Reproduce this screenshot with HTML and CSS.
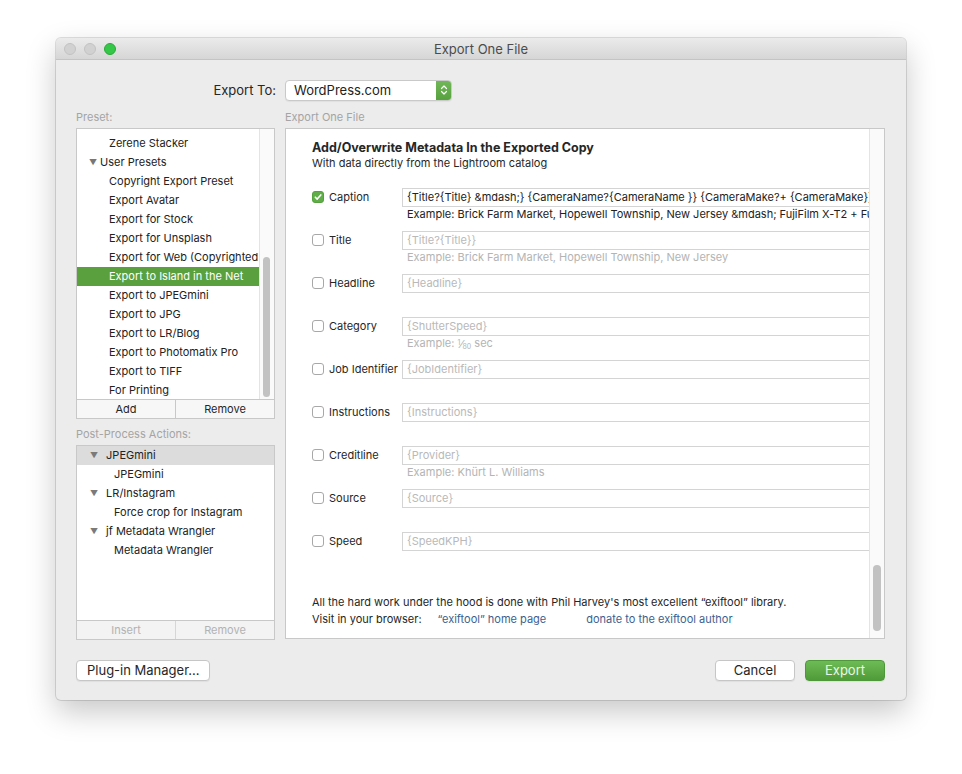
FILE: index.html
```html
<!DOCTYPE html>
<html>
<head>
<meta charset="utf-8">
<title>Export One File</title>
<link rel="stylesheet" href="styles.css">
</head>
<body>
<div class="window">
  <div class="titlebar">
    <div class="lights">
      <span class="light gray"></span>
      <span class="light gray"></span>
      <span class="light green"></span>
    </div>
    <div class="title">Export One File</div>
  </div>
  <div class="content">
    <div class="export-to">
      <span class="export-label">Export To:</span>
      <div class="popup">
        <span class="popup-text">WordPress.com</span>
        <span class="stepper">
          <svg width="8" height="12" viewBox="0 0 8 12"><path d="M1.5 4.5 L4 2 L6.5 4.5 M1.5 7.5 L4 10 L6.5 7.5" fill="none" stroke="#fff" stroke-width="1.2" stroke-linecap="round" stroke-linejoin="round"/></svg>
        </span>
      </div>
    </div>
    <div class="main">
      <div class="left">
        <div class="section-label">Preset:</div>
        <div class="listbox preset-box">
          <div class="list preset-list">
            <div class="rows">
              <div class="row child">Zerene Stacker</div>
              <div class="row group"><span class="tri">&#9660;</span>User Presets</div>
              <div class="row child">Copyright Export Preset</div>
              <div class="row child">Export Avatar</div>
              <div class="row child">Export for Stock</div>
              <div class="row child">Export for Unsplash</div>
              <div class="row child">Export for Web (Copyrighted</div>
              <div class="row child selected">Export to Island in the Net</div>
              <div class="row child">Export to JPEGmini</div>
              <div class="row child">Export to JPG</div>
              <div class="row child">Export to LR/Blog</div>
              <div class="row child">Export to Photomatix Pro</div>
              <div class="row child">Export to TIFF</div>
              <div class="row child">For Printing</div>
            </div>
            <div class="vscroll small"><div class="thumb preset-thumb"></div></div>
          </div>
          <div class="list-buttons">
            <div class="lbtn">Add</div>
            <div class="lbtn">Remove</div>
          </div>
        </div>
        <div class="section-label post-label">Post-Process Actions:</div>
        <div class="listbox post-box">
          <div class="list post-list">
            <div class="prow group2 hilite"><span class="tri2">&#9660;</span>JPEGmini</div>
            <div class="prow child2">JPEGmini</div>
            <div class="prow group2"><span class="tri2">&#9660;</span>LR/Instagram</div>
            <div class="prow child2">Force crop for Instagram</div>
            <div class="prow group2"><span class="tri2">&#9660;</span>jf Metadata Wrangler</div>
            <div class="prow child2">Metadata Wrangler</div>
          </div>
          <div class="list-buttons disabled">
            <div class="lbtn">Insert</div>
            <div class="lbtn">Remove</div>
          </div>
        </div>
      </div>
      <div class="right">
        <div class="section-label">Export One File</div>
        <div class="panel">
          <div class="panel-body">
            <div class="heading">Add/Overwrite Metadata In the Exported Copy</div>
            <div class="subheading">With data directly from the Lightroom catalog</div>
            <div class="fields">
              <div class="field">
                <div class="check-label"><span class="cb checked"><svg width="10" height="10" viewBox="0 0 10 10"><path d="M2.3 5.2 L4.2 7.1 L7.8 2.9" fill="none" stroke="#fff" stroke-width="1.6" stroke-linecap="round" stroke-linejoin="round"/></svg></span><span class="flabel">Caption</span></div>
                <div class="fcol">
                  <div class="input">{Title?{Title} &amp;mdash;} {CameraName?{CameraName }} {CameraMake?+ {CameraMake}}</div>
                  <div class="example dark">Example: Brick Farm Market, Hopewell Township, New Jersey &amp;mdash; FujiFilm X-T2 + FujiFilm</div>
                </div>
              </div>
              <div class="field">
                <div class="check-label"><span class="cb"></span><span class="flabel">Title</span></div>
                <div class="fcol">
                  <div class="input ph">{Title?{Title}}</div>
                  <div class="example">Example: Brick Farm Market, Hopewell Township, New Jersey</div>
                </div>
              </div>
              <div class="field">
                <div class="check-label"><span class="cb"></span><span class="flabel">Headline</span></div>
                <div class="fcol"><div class="input ph">{Headline}</div></div>
              </div>
              <div class="field">
                <div class="check-label"><span class="cb"></span><span class="flabel">Category</span></div>
                <div class="fcol">
                  <div class="input ph">{ShutterSpeed}</div>
                  <div class="example">Example: <span class="frac"><sup>1</sup>&#8260;<sub>80</sub></span> sec</div>
                </div>
              </div>
              <div class="field">
                <div class="check-label"><span class="cb"></span><span class="flabel">Job Identifier</span></div>
                <div class="fcol"><div class="input ph">{JobIdentifier}</div></div>
              </div>
              <div class="field">
                <div class="check-label"><span class="cb"></span><span class="flabel">Instructions</span></div>
                <div class="fcol"><div class="input ph">{Instructions}</div></div>
              </div>
              <div class="field">
                <div class="check-label"><span class="cb"></span><span class="flabel">Creditline</span></div>
                <div class="fcol">
                  <div class="input ph">{Provider}</div>
                  <div class="example">Example: Khürt L. Williams</div>
                </div>
              </div>
              <div class="field">
                <div class="check-label"><span class="cb"></span><span class="flabel">Source</span></div>
                <div class="fcol"><div class="input ph">{Source}</div></div>
              </div>
              <div class="field">
                <div class="check-label"><span class="cb"></span><span class="flabel">Speed</span></div>
                <div class="fcol"><div class="input ph">{SpeedKPH}</div></div>
              </div>
            </div>
            <div class="credits">
              <div>All the hard work under the hood is done with Phil Harvey's most excellent “exiftool” library.</div>
              <div class="visit"><span>Visit in your browser:</span><span class="link l1">“exiftool” home page</span><span class="link l2">donate to the exiftool author</span></div>
            </div>
          </div>
          <div class="vscroll big"><div class="thumb panel-thumb"></div></div>
        </div>
      </div>
    </div>
    <div class="footer">
      <div class="btn">Plug-in Manager...</div>
      <div class="footer-right">
        <div class="btn cancel">Cancel</div>
        <div class="btn export">Export</div>
      </div>
    </div>
  </div>
</div>
</body>
</html>
```
FILE: styles.css
```css
* { box-sizing: border-box; }
html, body { margin: 0; padding: 0; background: #fff; }
body {
  font-family: Inter, "Noto Sans", "Liberation Sans", sans-serif;
  font-size: 11px;
  color: #262626;
  width: 962px;
  height: 774px;
  overflow: hidden;
}
.window {
  margin: 38px 0 0 56px;
  width: 850px;
  height: 662px;
  background: #ececec;
  border-radius: 5px;
  box-shadow: 0 0 0 1px rgba(0,0,0,0.12), 0 12px 30px rgba(0,0,0,0.22);
  overflow: hidden;
}
.titlebar {
  height: 22px;
  background: linear-gradient(#ebebeb, #d6d6d6);
  border-bottom: 1px solid #c4c4c4;
  display: flex;
  align-items: center;
  position: relative;
}
.lights { display: flex; gap: 8px; padding-left: 8px; }
.light { width: 12px; height: 12px; border-radius: 50%; display: block; }
.light.gray { background: #d1d1d1; border: 1px solid #c2c2c2; }
.light.green { background: #34c748; border: 1px solid #2aa83a; }
.title {
  position: absolute; left: 0; right: 0; top: 0; height: 22px;
  line-height: 22px; text-align: center; font-size: 13px; color: #4c4c4c;
}
.content { padding: 0 21px 0 20px; }
.export-to {
  display: flex; align-items: center; height: 20px; margin-top: 20px;
}
.export-label { width: 209px; text-align: right; font-size: 13px; color: #262626; padding-right: 9px; }
.popup {
  width: 167px; height: 21px;
  background: #fff;
  border: 1px solid #c9c9c9;
  border-radius: 4px;
  display: flex; align-items: center;
  box-shadow: 0 1px 1px rgba(0,0,0,0.05);
  overflow: hidden;
}
.popup-text { flex: 1; font-size: 13px; padding-left: 8px; color: #222; }
.stepper {
  width: 16px; height: 21px; margin-right: -1px;
  background: linear-gradient(#72b85a, #56a03d);
  display: flex; align-items: center; justify-content: center;
  border-radius: 0 4px 4px 0;
}
.main { display: flex; gap: 10px; margin-top: 9px; }
.left { width: 200px; }
.right { width: 600px; }
.section-label { color: #a4a4a4; font-size: 11px; height: 19px; line-height: 17px; }
.listbox { background: #fff; border: 1px solid #c8c8c8; }
.list { display: flex; position: relative; }
.preset-list { height: 270px; overflow: hidden; }
.rows { flex: 1; padding-top: 5px; }
.row { height: 19px; line-height: 19px; white-space: nowrap; overflow: hidden; font-size: 11px; color: #222; }
.row.child { padding-left: 32px; }
.row.group { padding-left: 12px; }
.tri { font-size: 8px; color: #777; margin-right: 3px; display: inline-block; vertical-align: 1px; }
.row.selected { background: #5aa03f; color: #fff; }
.vscroll { background: #fafafa; border-left: 1px solid #e4e4e4; position: relative; }
.vscroll.small { width: 15px; }
.thumb { position: absolute; background: #c2c2c2; border-radius: 4px; }
.preset-thumb { left: 3px; width: 7px; top: 128px; height: 140px; }
.list-buttons { display: flex; border-top: 1px solid #c8c8c8; height: 19px; background: #f7f7f7; }
.lbtn { flex: 1; text-align: center; line-height: 18px; font-size: 11px; color: #262626; }
.lbtn + .lbtn { border-left: 1px solid #c8c8c8; }
.list-buttons.disabled { background: #f3f3f3; }
.list-buttons.disabled .lbtn { color: #b2b2b2; }
.list-buttons.disabled .lbtn + .lbtn { border-left-color: #d6d6d6; }
.post-label { margin-top: 7px; }
.post-list { flex-direction: column; height: 174px; }
.prow { height: 19px; line-height: 19px; font-size: 11px; color: #222; white-space: nowrap; }
.prow.group2 { padding-left: 13px; }
.prow.child2 { padding-left: 37px; }
.prow.hilite { background: #dcdcdc; }
.tri2 { font-size: 8px; color: #7a7a7a; margin-right: 8px; display: inline-block; vertical-align: 1px; }
.panel {
  background: #fff; border: 1px solid #c8c8c8;
  height: 511px; display: flex; overflow: hidden;
}
.panel-body { flex: 1; padding: 11px 0 0 26px; overflow: hidden; position: relative; }
.heading { font-weight: 700; font-size: 12.5px; color: #262626; line-height: 16px; }
.subheading { font-size: 11px; color: #262626; line-height: 14px; }
.fields { margin-top: 18px; }
.field { display: flex; height: 43px; }
.check-label { width: 90px; display: flex; align-items: flex-start; padding-top: 3px; }
.cb {
  width: 12px; height: 12px; border: 1px solid #a8a8a8; border-radius: 3px; background: #fff;
  display: inline-flex; align-items: center; justify-content: center; flex: none;
}
.cb.checked { background: #5fae48; border-color: #56a03f; }
.flabel { margin-left: 5px; font-size: 11px; line-height: 12px; color: #262626; white-space: nowrap; }
.fcol { flex: 1; min-width: 0; }
.input {
  height: 19px; border: 1px solid #d4d4d4; border-right: none; line-height: 17px; padding-left: 4px;
  font-size: 11px; color: #222; white-space: nowrap; overflow: hidden;
}
.input.ph { color: #b9b9b9; }
.example { font-size: 11px; color: #b4b4b4; padding-left: 5px; line-height: 14px; white-space: nowrap; }
.example.dark { color: #222; overflow: hidden; }
.frac { display: inline-block; line-height: 12px; vertical-align: -1px; }
.frac sup, .frac sub { font-size: 7px; line-height: 0; }
.frac sup { vertical-align: 3px; }
.frac sub { vertical-align: -1px; }
.credits { position: absolute; left: 26px; top: 465px; font-size: 11px; color: #262626; line-height: 17px; }
.visit { display: flex; }
.link { color: #3d5f8f; }
.l1 { margin-left: 16px; }
.l2 { margin-left: 40px; }
.vscroll.big { width: 15px; }
.panel-thumb { left: 3px; width: 8px; top: 436px; height: 66px; }
.footer { display: flex; justify-content: space-between; margin-top: 20px; }
.footer-right { display: flex; gap: 10px; }
.btn {
  height: 21px; line-height: 19px; border: 1px solid #c6c6c6; border-radius: 4px; background: #fff;
  font-size: 13px; color: #262626; text-align: center; padding: 0 10px;
  box-shadow: 0 1px 1px rgba(0,0,0,0.06);
}
.cancel, .export { width: 80px; padding: 0; }
.export { background: linear-gradient(#6dbb56, #4f9b39); border-color: #4e9839; color: #eaf6e4; }
```
